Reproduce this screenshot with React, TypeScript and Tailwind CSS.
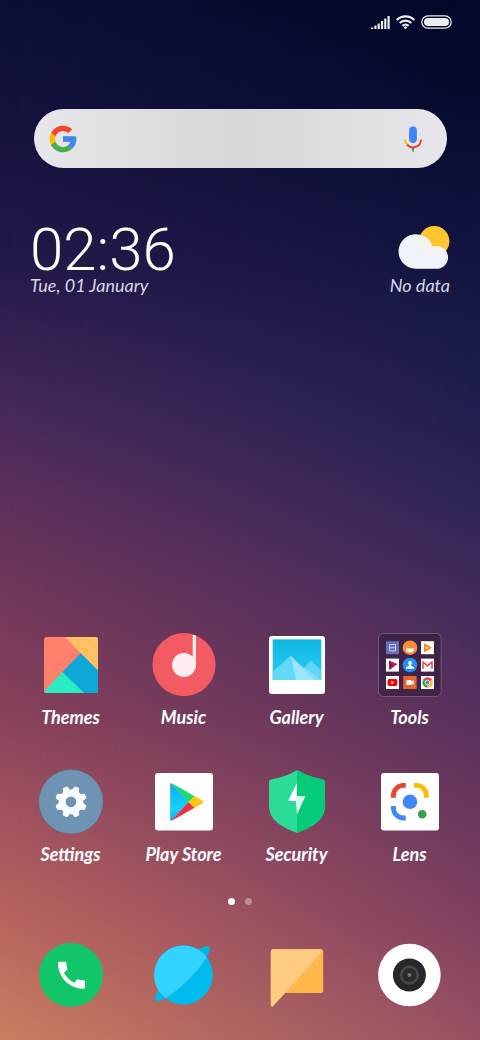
import React from "react";

type IconProps = { children: React.ReactNode };

function Icon({ children }: IconProps) {
  return (
    <svg viewBox="0 0 64 64" className="size-16 overflow-visible" aria-hidden="true">
      {children}
    </svg>
  );
}

function ThemesIcon() {
  return (
    <Icon>
      <clipPath id="themes-tile">
        <rect x="5" y="4" width="54" height="56" rx="2.5" />
      </clipPath>
      <g clipPath="url(#themes-tile)">
        <rect x="5" y="4" width="54" height="56" fill="#ff806d" />
        <path d="M26 4H59V38L41.7 20.3Z" fill="#ffc061" />
        <path d="M41.7 20.3L59 37.6V60H44L23.3 39Z" fill="#0ea7da" />
        <path d="M23.3 39L45.3 60H5V58.5Z" fill="#2bedc3" />
      </g>
    </Icon>
  );
}

function MusicIcon() {
  return (
    <Icon>
      <circle cx="32" cy="31.6" r="31.6" fill="#f35a62" />
      <path d="M40.7 1.8L44 2.6V32A12 12 0 1 1 40.7 23.7Z" fill="#ffecee" />
    </Icon>
  );
}

function GalleryIcon() {
  return (
    <Icon>
      <defs>
        <linearGradient id="gallery-sky" x1="0" y1="0" x2="0" y2="1">
          <stop offset="0" stopColor="#0fb8e2" />
          <stop offset="1" stopColor="#2cc9f3" />
        </linearGradient>
      </defs>
      <rect x="4" y="3" width="56" height="58" rx="3" fill="#fff" />
      <rect x="7.7" y="6.4" width="48.6" height="40.6" fill="url(#gallery-sky)" />
      <path d="M35 38.5L46 27.7L56.3 37.5V47H35Z" fill="#5fd6f8" />
      <path d="M7.7 38.5L25.7 22.7L50 47H7.7Z" fill="#62d8f9" />
      <path d="M25.7 22.7L50 47H31Z" fill="#9be6fc" />
      <path d="M37.5 34.5L43 37L56.3 47H50Z" fill="#7edffb" />
    </Icon>
  );
}

function ToolsIcon() {
  return (
    <Icon>
      <rect x="0.5" y="0.5" width="62.6" height="63" rx="5" fill="#341a3c" fillOpacity="0.6" stroke="#fff" strokeOpacity="0.22" />
      <rect x="8" y="8.2" width="13" height="13" fill="#6173b3" />
      <path d="M11.5 11.5h6v6.4h-6zM11.5 14.7h6" fill="none" stroke="#c3cdf0" strokeWidth="1" />
      <circle cx="32" cy="14.7" r="7.3" fill="#fb8c34" />
      <path d="M28 15.5h8a4 4 0 0 1-8 0z" fill="#fff" />
      <rect x="43" y="8.2" width="13" height="13" fill="#fff" />
      <path d="M46 10L54 14.8L46 19.4Z" fill="#ff9800" />
      <circle cx="48.6" cy="14.8" r="2.1" fill="#ffd54f" stroke="#e8552c" strokeWidth="0.8" />
      <rect x="8" y="25.6" width="13" height="13" fill="#fff" />
      <path d="M11 27.5L19.5 31L11.5 37Z" fill="#c2185b" />
      <path d="M11 27.5L14 32L11.5 37Z" fill="#7b1040" />
      <circle cx="32" cy="32" r="7.3" fill="#2491f2" />
      <circle cx="32" cy="30" r="1.9" fill="#fff" />
      <path d="M31 31h2v1.8l3 1.5v1.4h-8v-1.4l3-1.5z" fill="#fff" />
      <rect x="43" y="25.6" width="13" height="13" fill="#fff" />
      <path d="M45 28.6h9v7h-9z" fill="#eceff1" />
      <path d="M45 35.8V29L49.5 32.8L54 29V35.8" fill="none" stroke="#e04a3f" strokeWidth="1.5" />
      <rect x="8" y="43" width="13" height="13" fill="#fff" />
      <rect x="9.6" y="46" width="9.8" height="7" rx="1.7" fill="#f00" />
      <path d="M13.4 47.8L16.2 49.5L13.4 51.2Z" fill="#fff" />
      <rect x="25.2" y="43" width="13.4" height="13" fill="#e3672f" />
      <path d="M28.5 47h5v1.7l2.2-1.4v4.6l-2.2-1.4v1.5h-5z" fill="#fff" />
      <rect x="43" y="43" width="13" height="13" fill="#fff" />
      <path d="M49.5 49.5L45 46.9A5.3 5.3 0 0 1 54.1 46.9Z" fill="#ea4335" />
      <path d="M49.5 49.5L54.1 46.9A5.3 5.3 0 0 1 49.5 54.8Z" fill="#fbc02d" />
      <path d="M49.5 49.5V54.8A5.3 5.3 0 0 1 45 46.9Z" fill="#34a853" />
      <circle cx="49.5" cy="49.5" r="2.3" fill="#4285f4" stroke="#fff" strokeWidth="0.7" />
    </Icon>
  );
}

const gearAngles = [22.5, 67.5, 112.5, 157.5, 202.5, 247.5, 292.5, 337.5];

function SettingsIcon() {
  return (
    <Icon>
      <circle cx="32" cy="31.8" r="32.2" fill="#6f93b3" stroke="#4d5f80" strokeOpacity="0.5" strokeWidth="0.6" />
      <g fill="#f8fbfd">
        {gearAngles.map((a) => (
          <path key={a} d="M28 22L29.3 17Q29.6 16 30.5 16H33.5Q34.4 16 34.7 17L36 22Z" transform={`rotate(${a} 32 31.8)`} />
        ))}
      </g>
      <circle cx="32" cy="31.8" r="8.9" fill="none" stroke="#f8fbfd" strokeWidth="7" />
    </Icon>
  );
}

function PlayStoreIcon() {
  return (
    <Icon>
      <defs>
        <linearGradient id="play-blue" x1="0" y1="0" x2="0" y2="1">
          <stop offset="0" stopColor="#12a8e8" />
          <stop offset="0.7" stopColor="#16d3fb" />
          <stop offset="1" stopColor="#0aa5e8" />
        </linearGradient>
        <clipPath id="play-shape">
          <path d="M18.2 14.6Q18.2 12.4 20.3 13.4L50.3 30.6Q52.2 32 50.3 33.4L20.3 50.6Q18.2 51.6 18.2 49.4Z" />
        </clipPath>
      </defs>
      <rect x="3" y="3" width="58" height="57.4" rx="3" fill="#fff" />
      <g clipPath="url(#play-shape)">
        <path d="M18 12V52L37 32Z" fill="url(#play-blue)" />
        <path d="M18 12L36.5 32L43 26.2Z" fill="#18dc72" />
        <path d="M18 52L36.5 32L43 37.8Z" fill="#f02f46" />
        <path d="M36.5 32L42.8 25.6L53 32L42.8 38.4Z" fill="#fcc710" />
      </g>
    </Icon>
  );
}

function SecurityIcon() {
  return (
    <Icon>
      <path d="M30.8 .8Q32 .1 33.2 .8Q44 7.4 58 9.4Q60 9.7 60 11.5V36C60 49 49 56.5 33.2 62.4Q32 62.9 30.8 62.4C15 56.5 4 49 4 36V11.5Q4 9.7 6 9.4Q20 7.4 30.8 .8Z" fill="#2bdc96" />
      <path d="M32 .4Q32.6 .4 33.2 .8Q44 7.4 58 9.4Q60 9.7 60 11.5V36C60 49 49 56.5 33.2 62.4Q32.6 62.8 32 62.8Z" fill="#04cc7b" />
      <path d="M32 13L23 31H32Z" fill="#fff" />
      <path d="M32 13V26H40.5L32 44.5V31H31Z" fill="#d9f8eb" />
      <path d="M31 31H32V44.5Z" fill="#fff" />
    </Icon>
  );
}

function LensIcon() {
  return (
    <Icon>
      <rect x="3" y="3" width="58" height="57.4" rx="3" fill="#fff" />
      <g fill="none" strokeWidth="4.8">
        <path d="M15.4 27.7V25.4A10 10 0 0 1 25.4 15.4H27.7" stroke="#ea4335" />
        <path d="M36 15.4H38.3A10 10 0 0 1 48.3 25.4V27.7" stroke="#fbbc04" />
        <path d="M15.4 36V38A10 10 0 0 0 25.4 48H27.7" stroke="#4285f4" />
      </g>
      <circle cx="32" cy="31.8" r="7.3" fill="#4285f4" />
      <circle cx="44.2" cy="44.3" r="4.3" fill="#34a04f" />
    </Icon>
  );
}

function PhoneIcon() {
  return (
    <Icon>
      <circle cx="32" cy="32" r="32" fill="#12c569" />
      <path
        transform="translate(14.5 14.2) scale(1.5)"
        fill="#fff"
        d="M20.01 15.38c-1.23 0-2.42-.2-3.53-.56a.977.977 0 0 0-1.01.24l-1.57 1.97c-2.83-1.35-5.48-3.9-6.89-6.83l1.95-1.66c.27-.28.35-.67.24-1.02-.37-1.11-.56-2.3-.56-3.53 0-.54-.45-.99-.99-.99H4.19C3.65 3 3 3.24 3 3.99 3 13.28 10.73 21 20.01 21c.71 0 .99-.63.99-1.18v-3.45c0-.54-.45-.99-.99-.99z"
      />
    </Icon>
  );
}

function BrowserIcon() {
  return (
    <Icon>
      <clipPath id="planet">
        <circle cx="31.5" cy="32" r="29.4" />
      </clipPath>
      <ellipse cx="30.3" cy="30.7" rx="38" ry="8.5" transform="rotate(-45 30.3 30.7)" fill="#04b5ea" />
      <circle cx="31.5" cy="32" r="29.4" fill="#00bbee" />
      <path d="M3.4 57.6A38 8.5 -45 0 0 57.2 3.8L30 -10L-10 0V57Z" fill="#33d3ff" clipPath="url(#planet)" />
    </Icon>
  );
}

function MessagesIcon() {
  return (
    <Icon>
      <path d="M8.5 6.2H55.5Q58.2 6.2 58.2 9V47.2Q58.2 50 55.5 50H20L8 63Q5.8 64.6 5.8 61.8V9Q5.8 6.2 8.5 6.2Z" fill="#ffb74b" />
      <path d="M8.5 6.2H55.5Q57 6.2 57.8 7.8L20 50L8 63Q5.8 64.6 5.8 61.8V9Q5.8 6.2 8.5 6.2Z" fill="#ffcb80" />
    </Icon>
  );
}

function CameraIcon() {
  return (
    <Icon>
      <circle cx="31.4" cy="32" r="31.3" fill="#fff" />
      <circle cx="31.4" cy="32" r="16.5" fill="#25272a" />
      <circle cx="31.4" cy="32" r="8.4" fill="#292b2f" stroke="#45474b" strokeWidth="2.6" />
      <circle cx="31.4" cy="32" r="2" fill="#717377" />
    </Icon>
  );
}

const apps = [
  { name: "Themes", Art: ThemesIcon },
  { name: "Music", Art: MusicIcon },
  { name: "Gallery", Art: GalleryIcon },
  { name: "Tools", Art: ToolsIcon },
  { name: "Settings", Art: SettingsIcon },
  { name: "Play Store", Art: PlayStoreIcon },
  { name: "Security", Art: SecurityIcon },
  { name: "Lens", Art: LensIcon },
];

const dock = [
  { name: "Phone", Art: PhoneIcon },
  { name: "Browser", Art: BrowserIcon },
  { name: "Messages", Art: MessagesIcon },
  { name: "Camera", Art: CameraIcon },
];

function StatusBar() {
  return (
    <header className="flex h-11 items-center justify-end gap-1.5 pr-7">
      <svg viewBox="0 0 19 13" className="h-[13px] w-[19px]" fill="#eceef4" aria-hidden="true">
        <path d="M0 11.4h2.2V13H0zM3.3 9.6h2.2V13H3.3zM6.6 7.4h2.2V13H6.6zM9.9 5h2.2v8H9.9zM13.2 2.6h2.2V13h-2.2zM16.5 0h2.2v13h-2.2z" />
      </svg>
      <svg viewBox="0 0 19 14" className="h-3.5 w-[19px]" fill="none" stroke="#eceef4" strokeWidth="2.3" aria-hidden="true">
        <path d="M.8 5A12.4 12.4 0 0 1 18.2 5M3.7 8A8.3 8.3 0 0 1 15.3 8M6.4 10.8A4.5 4.5 0 0 1 12.6 10.8" />
        <circle cx="9.5" cy="12.6" r="1.4" fill="#eceef4" stroke="none" />
      </svg>
      <svg viewBox="0 0 31 14" className="h-3.5 w-[31px]" aria-hidden="true">
        <rect x="0.8" y="0.8" width="29.4" height="12.4" rx="6.2" fill="none" stroke="#eceef4" strokeWidth="1.3" />
        <rect x="3" y="3" width="25" height="8" rx="4" fill="#eceef4" />
      </svg>
    </header>
  );
}

function SearchBar() {
  return (
    <form
      role="search"
      onSubmit={(e) => e.preventDefault()}
      className="mt-[65px] mr-[33px] ml-[34px] flex h-[59px] items-center rounded-full bg-linear-to-r from-[#e7e6eb] via-[#d5d7da] to-[#e7e7eb] pr-6 pl-[13px]"
    >
      <svg viewBox="0 0 48 48" className="size-8" aria-hidden="true">
        <path fill="#fbbc05" d="M43.611 20.083H42V20H24v8h11.303c-1.649 4.657-6.08 8-11.303 8-6.627 0-12-5.373-12-12s5.373-12 12-12c3.059 0 5.842 1.154 7.961 3.039l5.657-5.657C34.046 6.053 29.268 4 24 4 12.955 4 4 12.955 4 24s8.955 20 20 20 20-8.955 20-20c0-1.341-.138-2.65-.389-3.917z" />
        <path fill="#f44336" d="M6.306 14.691l6.571 4.819C14.655 15.108 18.961 12 24 12c3.059 0 5.842 1.154 7.961 3.039l5.657-5.657C34.046 6.053 29.268 4 24 4 16.318 4 9.656 8.337 6.306 14.691z" />
        <path fill="#43ae52" d="M24 44c5.166 0 9.86-1.977 13.409-5.192l-6.19-5.238C29.211 35.091 26.715 36 24 36c-5.202 0-9.619-3.317-11.283-7.946l-6.522 5.025C9.505 39.556 16.227 44 24 44z" />
        <path fill="#4285f4" d="M43.611 20.083H42V20H24v8h11.303c-.792 2.237-2.231 4.166-4.087 5.571l6.19 5.238C36.971 39.205 44 34 44 24c0-1.341-.138-2.65-.389-3.917z" />
      </svg>
      <input type="text" aria-label="Search" className="h-full min-w-0 flex-1 bg-transparent px-3 font-['Lato',sans-serif] text-lg text-gray-800 outline-none" />
      <button type="button" aria-label="Voice search">
        <svg viewBox="0 0 20 28" className="h-7 w-5" fill="none" strokeWidth="2" aria-hidden="true">
          <rect x="6.1" y="1.6" width="7.8" height="16.4" rx="3.9" fill="#4285f4" />
          <path d="M10 22.4V26.4" stroke="#34a853" />
          <path d="M2 14.4A8 8 0 0 0 4.4 20" stroke="#fbbc05" />
          <path d="M4.2 19.8A8 8 0 0 0 18 14.4" stroke="#ea4335" />
        </svg>
      </button>
    </form>
  );
}

function Widgets() {
  return (
    <section className="mt-[58px] flex items-start justify-between px-[30px] font-['Lato',sans-serif] text-white">
      <div>
        <time className="block font-['Roboto',sans-serif] text-[60px] leading-[47px] font-light">02:36</time>
        <p className="text-lg leading-6 whitespace-nowrap text-[#dad6e6] italic">Tue, 01 January</p>
      </div>
      <div className="flex flex-col items-end">
        <svg viewBox="0 0 52 43" className="h-[43px] w-[52px]" aria-hidden="true">
          <circle cx="36.2" cy="15.2" r="15.2" fill="#ffc52f" />
          <path d="M17.5 42.8A17.3 17.3 0 1 1 34.5 20.8A11.4 11.4 0 1 1 38 42.8Z" fill="#eff4fb" />
          <path d="M21.2 17.5A15.2 15.2 0 0 0 36.2 30.4A15.2 15.2 0 0 0 45 23A11.4 11.4 0 0 0 34.5 20.8A17.3 17.3 0 0 0 21.2 8.4Z" fill="#f6f5ee" fillOpacity="0.8" />
        </svg>
        <p className="mt-1 text-lg leading-6 text-[#dad6e6] italic">No data</p>
      </div>
    </section>
  );
}

export default function App() {
  return (
    <div className="bg-[linear-gradient(180deg,#0c0f35_0%,#171440_14%,#261a4b_26%,#45295a_39%,#60315a_49%,#75395b_58%,#88415b_68%,#a2525e_78%,#b9645e_88%,#c97f60_100%)]">
      <div className="relative min-h-screen">
        <div className="absolute inset-0 bg-[linear-gradient(180deg,#020828_0%,#060c2f_10%,#0e113b_20%,#171945_30%,#201f50_40%,#302558_49%,#432b5b_58%,#55305c_68%,#6a375e_78%,#7e3f60_88%,#985062_100%)] [mask-image:linear-gradient(to_right,transparent,black)]" />
        <main className="relative flex min-h-screen flex-col pb-[33px]">
          <StatusBar />
          <SearchBar />
          <Widgets />
          <div className="flex-1" />
          <nav aria-label="Apps" className="grid grid-cols-4 gap-y-[33px] px-3.5">
            {apps.map(({ name, Art }) => (
              <button key={name} type="button" className="flex flex-col items-center">
                <Art />
                <span className="font-['Lato',sans-serif] text-lg leading-10 font-bold whitespace-nowrap text-white italic">{name}</span>
              </button>
            ))}
          </nav>
          <div className="mt-6 flex justify-center gap-2.5" aria-hidden="true">
            <span className="size-[7px] rounded-full bg-white" />
            <span className="size-[7px] rounded-full bg-white/35" />
          </div>
          <nav aria-label="Dock" className="mt-[38px] grid grid-cols-4 px-3.5">
            {dock.map(({ name, Art }) => (
              <button key={name} type="button" aria-label={name} className="flex justify-center">
                <Art />
              </button>
            ))}
          </nav>
        </main>
      </div>
    </div>
  );
}
